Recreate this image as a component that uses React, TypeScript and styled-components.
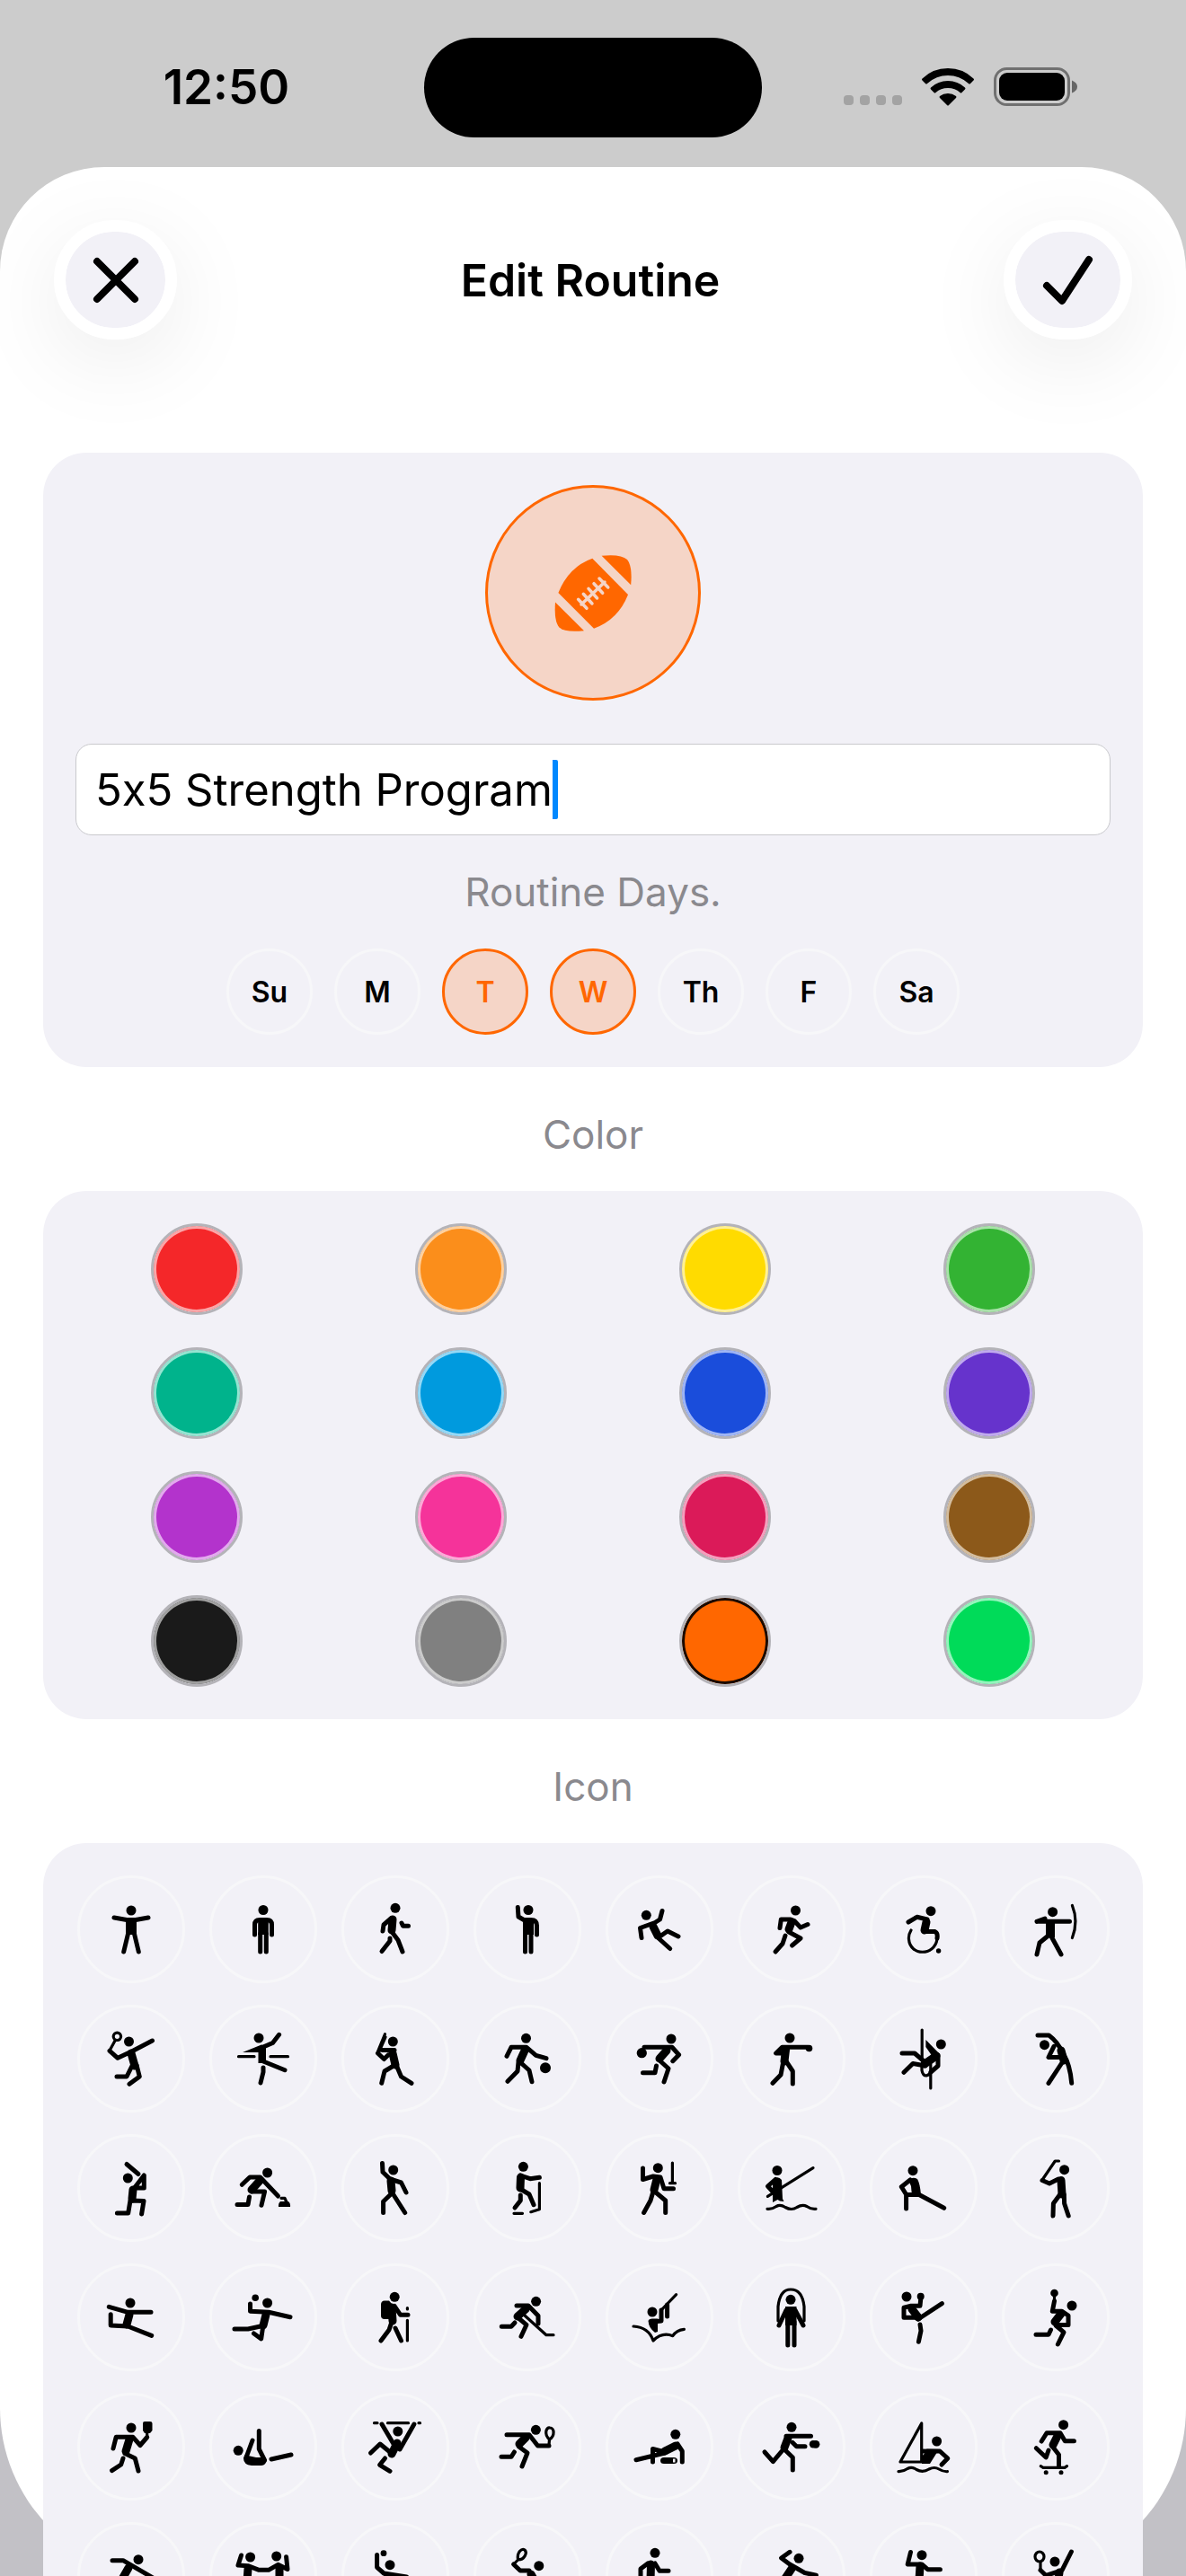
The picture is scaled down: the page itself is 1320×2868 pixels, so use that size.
import { useState } from 'react';
import styled, { createGlobalStyle } from 'styled-components';

type Dot = [number, number, number?];

// All figures are drawn round 0,0 in a 72 x 72 box
interface Figure {
  name: string;
  dots: Dot[];
  limbs?: string;
  torso?: string;
  thin?: string;
  fill?: string;
}

const figures: Figure[] = [
  { name: 'Arms open', dots: [[0, -21]], limbs: 'M-19-13L-5-10.5H5L19-13M-3.5 5L-8.3 25M3.5 5L8.3 25', fill: 'M-6-11H6L6 6H-6Z' },
  { name: 'Stand', dots: [[0, -21.5]], limbs: 'M-9.5 6V-5Q-9.5-10.5-4-10.5H4Q9.5-10.5 9.5-5V6M-3.3 5V25M3.3 5V25', fill: 'M-5.8-12H5.8V6H-5.8Z' },
  { name: 'Walk', dots: [[0, -23.7]], limbs: 'M-5-12L-13-5L-14 2M7-7L8.5-3.7H14.5M-3 4L3 12L8 25M-6 10L-6 13L-15 24.5', torso: 'M-3-11L-4 1' },
  { name: 'Wave', dots: [[1, -21.5]], limbs: 'M-10.7-24.5L-10-14L-4-10.5H4Q10.5-10.5 10.5-4V6M-2.5 5V25M4 5V25', fill: 'M-5-12H7V6H-5Z' },
  { name: 'Fall', dots: [[-14.7, -15.7]], limbs: 'M3-20.5L.5-11L-5-7.5L-21.5-1.5L-20 9.5M-1 9L9 2L21 8M-1 10L11.7 21.5', torso: 'M-7-3L-2 7' },
  { name: 'Run', dots: [[4.5, -21]], limbs: 'M-13-1.5L-11.7-11H-1L3-9.5L10-2L18-5.5M-3 3L10 10L.5 18M-7 7L-10 16L-18 25', torso: 'M0-8L-3 0' },
  { name: 'Wheelchair', dots: [[8, -20.3], [16.6, 24, 2.7]], limbs: 'M-17-8L-7.5-13.7L4-11M2 2.5H12.5Q16 4 15 10', torso: 'M3-8L1 1', thin: 'M-14 1Q-17 6-16.5 11C-15 30 12 30 15 11V6' },
  { name: 'Archery', dots: [[-3.4, -19.3]], limbs: 'M-21-8.7L-12-12M-21-8.7H15.5M-7 6L-18 15L-21 28M-6 6L6 28', fill: 'M-11-10H-1V9H-11Z', thin: 'M18.4-26.5Q25.5-9 18.4 9.5' },

  { name: 'Badminton', dots: [[-2.5, -19]], limbs: 'M-24-8.7L-15-.7L2-8.7L23.5-20M1 8L-5 20H-16M6 7L9.3 20L-2 28.3', torso: 'M0-6L4 8', thin: 'M-11.4-24.7A4.2 4.2 0 1 0-19.8-24.7A4.2 4.2 0 1 0-11.4-24.7M-18-20L-24-9' },
  { name: 'Barre', dots: [[-5, -23]], limbs: 'M17.6-26.7L10.5-17.5L0-13M0 3L24 12.7M0 10V15L-3 27', fill: 'M-23-7L-2-15.5L3-14V5H-5.5V-7Z', thin: 'M-27.5-2.3H-10M8-2.3H27.5' },
  { name: 'Baseball', dots: [[-2.7, -19]], limbs: 'M-19.5-6L-12.6.5L-8-4M-14.5-9.5H-1M-2 8L-12 14L-15.3 27.3M1 7L6.5 20L18 27.3', torso: 'M-3-6L0 7', thin: 'M-11.5-27.3L-19.5-8M-11-24L-18-8' },
  { name: 'Basketball', dots: [[-1.5, -22.7], [20, 10.3, 6]], limbs: 'M-23-2.7L-18-12.7H-1L9.5-3.7L21-.3M-10 4L-11 14L-22 25.3M-8 4L2 13L5 25.7', torso: 'M-3-9L-8 2' },
  { name: 'Bowling', dots: [[13, -22], [-19.7, -6.3, 5.6]], limbs: 'M-17-12.7H14L21.6-4.3L14.8 2.7M-1 1L10 11L5 26M-3.5 8L-5 15.7H-18.5', torso: 'M8-9L0 0' },
  { name: 'Boxing', dots: [[-2, -23], [19.5, -11.5, 3.8]], limbs: 'M18-12.7H-10.5L-17.4-6H-10M-9.5 5L-12 18L-21 27.3M-6 3L1.3 14V28', torso: 'M-6.5-10L-8 3' },
  { name: 'Climbing', dots: [[19.3, -16]], limbs: 'M-24-6H-10L-.7 2M-22 15.3L-12 5.5L2 8M16-4V8L8 15', torso: 'M14-3L1 6', thin: 'M-1.8-32V-1M7.8 6V33M-2 8V13Q-1 19 3 19Q7 18 8 14', fill: 'M2.4-21L18-5L10-2L2.4-13Z' },
  { name: 'Cooldown', dots: [[-12.5, -15.3]], limbs: 'M-20-26H-7.6Q2-19 8-6Q16 6 17.7 27.3M-2-13.7L-8-1.5H6M8 3L-8 27.3', torso: 'M6-9L9 2' },

  { name: 'Cricket', dots: [[-3.7, -11]], limbs: 'M-5-26.5L8-15.5M14.3-14V0H4M14.3-14L2 2M1 14L14 14.5L11.6 29M-1 14L-3.3 28H-15.6', torso: 'M2 2L1 12' },
  { name: 'Curling', dots: [[4.6, -17]], limbs: 'M-23.7-3.7L-15-12H-3.4L16.5 9M-13 4H1.6L-2 19.3M-15.5 10L-17 18.5H-29', torso: 'M-4-8L-13 2', thin: 'M20 11.3H24L26 16', fill: 'M19 15H28Q30.5 17 30 21H17Q16.5 17 19 15Z' },
  { name: 'Dance', dots: [[-2.3, -20]], limbs: 'M-14.5-27.5L-14-17.7L-6-10L6.5-6L12 5M-3 6L10.7 27.5M-4 6L-13.4 15V27.5', torso: 'M-5-8L-4 3' },
  { name: 'Elliptical', dots: [[-4.6, -23.7]], limbs: 'M-8-14L3-10.3L13.4-11.7M-8 1L2 7L7 18.7M-7.7 8V14L-14 22', torso: 'M-7.5-12L-8 0', thin: 'M13.4-5.3V23.7L3.8 26.7M-15 28.3H-5.5' },
  { name: 'Fencing', dots: [[-1.7, -22.3]], limbs: 'M-18.5-22V-9.5L-7-13L1-12L5 .7H15.5M-7 4L-10 14L-17.4 27.5M-4 5L6.7 14V27.5', torso: 'M-3-10L-6 2', thin: 'M14.4-28V-7M11.5-5.3H17.5' },
  { name: 'Fishing', dots: [[-16, -19.5]], limbs: 'M-18-9.5L-26.5-2L-21 4', fill: 'M-20-10Q-15-14-11-9L-10 12L-8.5 15L-13 14.5L-15.5 13L-21 16L-21-4Z', thin: 'M-26.6 9.3L24-22.3M-27 23.3Q-22 24-17 20.5Q-12.5 18-7 21.5Q0 25.5 6 21.5Q12 18 17 20.5Q22 24 27 23.3' },
  { name: 'Flexibility', dots: [[-12, -19.3]], limbs: 'M-15-9L-24.7-1.3L-19.4 7.3V23M-19 7.5H-5L22.7 22.3', fill: 'M-17-9Q-12-13-7-10Q-4-5-3 8L-12 9Q-14 4-14-2Z' },
  { name: 'Golf', dots: [[9.6, -20.3]], limbs: 'M-15-8.5L-7-5L3-10M4.7 7.3L-2.6 17.3L-3 31M9.3 7.3L9.6 17.3L14.2 31', torso: 'M6-8.5L7 7', thin: 'M3.5-30H-.7L-15-9' },

  { name: 'Gymnastics', dots: [[-1, -16]], limbs: 'M-24.7-11.7L-3.7-5.7H22M-22.8-3.3V9L-3.7 10L22.7 20.3', torso: 'M-2-3L-5 8' },
  { name: 'Handball', dots: [[4.6, -16], [-8.8, -21.7, 3.8]], limbs: 'M-14.5-15V-6.7L6-5.7L30-.3M-3 10L-17 13H-32M0 8L-2.3 24L-10.5 18', torso: 'M3-3L0 9' },
  { name: 'Hiking', dots: [[-0.8, -22.7]], limbs: 'M-1-12.7L5.7-2.7H14M-4 5L-7 14L-16 26M0 12L6.5 26', torso: 'M-4-11L-3 4', thin: 'M13.4 3.3V26M13.4-10.5V-9', fill: 'M-12-18.5H-7L-3-14V2H-12Q-16 2-16-2V-14Q-16-18.5-12-18.5Z' },
  { name: 'Hockey', dots: [[9.6, -17.7]], limbs: 'M-12-13H1L12-1.7V7M-11 0L-1 8.3L-7 21.3M-14 6L-18 10.3H-28.7', torso: 'M-2-9L-11-1', thin: 'M-3-2L21 19.7H29' },
  { name: 'Kitesurf', dots: [[-8, -6]], limbs: 'M8.6-14V-1M2-8V4L-7 5', fill: 'M-12.5 4Q-12 1.5-8 1.5H-2V16L-5 17Q-12 12-12.5 4Z', thin: 'M18.6-25.3L2-8M-29 10Q-12 11-7 26Q3 16 14.8 20.7Q19 14 27.4 13.3' },
  { name: 'Jump rope', dots: [[-1, -19.7]], limbs: 'M-14 9L-6-8H4L13 9M-4.2 5V31M3 5V31', fill: 'M-7-12H5.5V9H-7Z', thin: 'M-15 4V-12Q-13-31-1-31Q12-31 14-12V4' },
  { name: 'Kickboxing', dots: [[-19, -23], [-3.3, -23.3, 4]], limbs: 'M-3.3-20L-4-12.7H-14L-22-10.7V.2H-8M-6 2L20.4-15.3M-4 8L-3 15L-5.6 27.3', torso: 'M-13-9L-6 0' },
  { name: 'Lacrosse', dots: [[18, -13], [-1.5, -27, 4.3]], limbs: 'M-1.5-18L-3.7-6.7H7L14-2V8.5H3.5M0 9L9 16.7L2.4 30M-5.5 14L-8 19.3H-22', torso: 'M6-4L-1 5', thin: 'M-1.5-25V-18' },

  { name: 'Pickleball', dots: [[0, -21]], limbs: 'M17.7-10.5L10-1.5L2-10.7H-16.8L-20 2M-7 7.5L4.3 13L8 27M-9 13L-11.3 20L-21.4 26.7', torso: 'M-2-8L-6 5', thin: 'M17.7-15V-10', fill: 'M15-28H21Q23.5-28 23.5-26V-18L21-15H15L13-18V-26Q13-28 15-28Z' },
  { name: 'Pilates', dots: [[-27.8, 4.3]], limbs: 'M-12-7L-19 12M-4.7-17.5V2.7L1.5 15M9 14L31 9', fill: 'M-20.5 9L-17 10L-8 12H1.5L4 15Q3 20.5-2 21H-13Q-22 20-22 13Z' },
  { name: 'Climbing bar', dots: [[2.8, -17]], limbs: 'M-15-25L-2-3M20.9-25L5 3M-6 6L-17-3L-27.5 7M-11.5 13L-17.4 20.3L-6 27.3', torso: 'M2-4L-4 8', thin: 'M-23.5-26.3H-20M-8.5-26.3H14.5M26-26.3H27.5' },
  { name: 'Racquetball', dots: [[9.4, -18.7]], limbs: 'M-23-13.3H2L11.5-1H24M-9.5 0L0 7L-6 22M-14.6 6L-18 11.3H-29', torso: 'M-2-10L-9-3', thin: 'M24-2L24.5-8C18-14 21-22 25-21C30-21 31-12 24.5-8' },
  { name: 'Foam roller', dots: [[17.8, -13.7]], limbs: 'M20-3L25.3 5V17M6 7L-26 14.7M6 6L-7.5 2.5V17', torso: 'M18-1L6 5', fill: 'M5 12H16Q20 12 20 15.5Q20 19 16 19H5Q1 19 1 15.5Q1 12 5 12ZM15 13.5V17.5H17.5V13.5Z' },
  { name: 'Rugby', dots: [[0, -21.7], [27, -2.7, 4.4], [24, -2.7, 4.2]], limbs: 'M-6-11.7H21.5M1-4.7L5.5-.3H15M-10 4L-20.6 16.7L-30 6M-7 4L1.3 12V26', torso: 'M-4-9.5L-8 1' },
  { name: 'Sailing', dots: [[14.6, -6]], limbs: 'M4 5H18L26.8 13L20 20', thin: 'M-2.3-26V17H-26ZM-28 27.7Q-23 28-18 24.5Q-13 22-8 25.5Q-1 29.5 6 25Q12 22 17 25Q22 28 26.4 27.7', fill: 'M-2 2.5L17 3L7 19H-2V11L1 7.5H-2Z' },
  { name: 'Skateboard', dots: [[8.6, -24.3], [-10.8, 28.7, 2.5], [6, 28.7, 2.5]], limbs: 'M-15.8-6L-10-15.3H5L10.3-6.3H20.4M-3.5 0L3.5 9V22M-8 4L-10.8 12L-21.7 1.7', torso: 'M2-12L-3-2', thin: 'M-16.7 21.7L-14 23.3H10L12.5 21.7' },

  { name: 'Skiing', dots: [[8, -18.3]], limbs: 'M-21-17.3H-9L24 2', torso: 'M-3-9L-11 5' },
  { name: 'Social dance', dots: [[-14.4, -21], [14.7, -22]], limbs: 'M-24.5-23L-28-12L-17-11.3L-4.7-6.7H5.9L16.4-12.7L27-7.5L25.6-21.3', torso: 'M-17-8L-18 6M18-9V6' },
  { name: 'Softball', dots: [[-6, -12.3], [-13, -25.3, 3.4]], limbs: 'M-20.4-23.5V-9.7L-12.8-3L12.5 1', torso: 'M-9 2V8' },
  { name: 'Squash', dots: [[12.8, -11.3]], limbs: 'M-15.4-13L-8-6H2', torso: 'M4-2L8 5', thin: 'M-15.4-13L-10.5-18C-12-27-6-31-3-29C0-26-3-18-10.5-18' },
  { name: 'Stair stepper', dots: [[-5, -25.7]], limbs: 'M-13-14L-21-8V4M-5-14L0-5.7H10', torso: 'M-9.5-13L-10 5' },
  { name: 'Strength', dots: [[8, -19.7]], limbs: 'M-2-26.7L-11.4-20L-2-13L14.7-3.5L27.4-.7', torso: 'M0-8L-8 4' },
  { name: 'Taichi', dots: [[-2, -23.3]], limbs: 'M-14.5-26.5L-17.8-13H-2L4.5-7.3H18.4', torso: 'M-4-11L-5 5' },
  { name: 'Tennis', dots: [[-1, -16]], limbs: 'M-17-6.5L-10.8-.5L7-6.3L17.4-27', torso: 'M4-4L2.7 5', thin: 'M-13-21.5A5 5.5 0 1 0-23-21.5A5 5.5 0 1 0-13-21.5M-17-15V-7' },
];

const swatches = [
  { name: 'Red', value: '#f42729', tint: '#faa5a7' },
  { name: 'Orange', value: '#fb8e1b', tint: '#fdd09f' },
  { name: 'Yellow', value: '#ffdb00', tint: '#fff095' },
  { name: 'Green', value: '#33b333', tint: '#aae2aa' },
  { name: 'Teal', value: '#00b38c', tint: '#95e4d1' },
  { name: 'Sky', value: '#009ade', tint: '#95d8f5' },
  { name: 'Blue', value: '#1a4ddb', tint: '#9fb5f4' },
  { name: 'Indigo', value: '#6633cc', tint: '#c0aaed' },
  { name: 'Purple', value: '#b333cc', tint: '#e2aaed' },
  { name: 'Pink', value: '#f5339a', tint: '#fbaad7' },
  { name: 'Crimson', value: '#db1a59', tint: '#f49fbd' },
  { name: 'Brown', value: '#8c591a', tint: '#d3bd9f' },
  { name: 'Black', value: '#1a1a1a', tint: '#9f9f9f' },
  { name: 'Gray', value: '#808080', tint: '#cbcbcb' },
  { name: 'Tangerine', value: '#ff6700', tint: '#ffc095' },
  { name: 'Mint', value: '#00db59', tint: '#95f4bd' },
];

const days = ['Su', 'M', 'T', 'W', 'Th', 'F', 'Sa'];

const FigureIcon = ({ dots, limbs, torso, thin, fill }: Figure) => (
  <FigureSvg viewBox="-36 -36 72 72" aria-hidden="true">
    {fill && <path d={fill} fill="#000" fillRule="evenodd" stroke="none" />}
    {torso && <path d={torso} strokeWidth="9" />}
    {limbs && <path d={limbs} strokeWidth="5" />}
    {thin && <path d={thin} strokeWidth="3.2" />}
    {dots.map(([x, y, r = 5.5]) => (
      <circle key={`${x},${y}`} cx={x} cy={y} r={r} fill="#000" stroke="none" />
    ))}
  </FigureSvg>
);

const Football = () => (
  <svg width="90" height="90" viewBox="-45 -45 90 90" aria-hidden="true">
    <g fill="#ff6700">
      <path d="M-.7-38.3L39 2Q28 30 1 39.7L-38.6 0Q-27-29-.7-38.3Z" />
      <path d="M9.6-41.3Q31-43.5 38-37Q44-30 42.2-8.7Z" />
      <path d="M-42 10.5Q-43.5 32-37.5 38.5Q-31 44.5-10 42.2Z" />
    </g>
    <path
      d="M-13 13L13-12M-16.4 7.3L-7 17.3M-10.7 1.3L-1 12M-5-4.7L4.6 6M1-10.3L10.7.3M7-16L16.8-6"
      fill="none"
      stroke="#f5d5c7"
      strokeWidth="3.5"
      strokeLinecap="round"
    />
  </svg>
);

const WifiIcon = () => (
  <svg width="58" height="42" viewBox="0 0 58 42" aria-hidden="true">
    <path d="M29 0Q46 0 57.5 11.5Q58.5 12.5 57.5 13.5L54 17Q53 18 52 17Q42 8 29 8Q16 8 6 17Q5 18 4 17L.5 13.5Q-.5 12.5.5 11.5Q12 0 29 0Z" />
    <path d="M29 14Q40 14 48 21.5Q49 22.5 48 23.5L44.5 27Q43.5 28 42.5 27Q37 22 29 22Q21 22 15.5 27Q14.5 28 13.5 27L10 23.5Q9 22.5 10 21.5Q18 14 29 14Z" />
    <path d="M29 28Q34 28 38 31Q39 32 38 33L30 41Q29 42 28 41L20 33Q19 32 20 31Q24 28 29 28Z" />
  </svg>
);

const BatteryIcon = () => (
  <svg width="94" height="44" viewBox="0 0 94 44" aria-hidden="true">
    <rect x="1.5" y="1.5" width="82" height="40" rx="13" fill="none" stroke="#000" strokeOpacity=".45" strokeWidth="3" />
    <rect x="6" y="6" width="73" height="31" rx="9" />
    <path d="M87 14.5Q93 17 93 21.5Q93 26 87 28.5Z" fillOpacity=".5" />
  </svg>
);

const App = () => {
  const [name, setName] = useState('5x5 Strength Program');
  const [activeDays, setActiveDays] = useState(['T', 'W']);
  const [color, setColor] = useState('#ff6700');

  const toggleDay = (day: string) => {
    setActiveDays((prev) => (prev.includes(day) ? prev.filter((d) => d !== day) : [...prev, day]));
  };

  return (
    <>
      <GlobalStyle />
      <Screen>
        <StatusBar>
          <Time>12:50</Time>
          <Island />
          <StatusIcons>
            <Signal>
              <i />
              <i />
              <i />
              <i />
            </Signal>
            <WifiIcon />
            <BatteryIcon />
          </StatusIcons>
        </StatusBar>
        <Sheet>
          <Header>
            <RoundButton type="button" aria-label="Cancel">
              <svg width="54" height="54" viewBox="-27 -27 54 54">
                <path d="M-21-21L21 21M21-21L-21 21" />
              </svg>
            </RoundButton>
            <Title>Edit Routine</Title>
            <RoundButton type="button" aria-label="Save" $wide>
              <svg width="60" height="60" viewBox="-30 -30 60 60">
                <path d="M-24 6L-7 23L23-23" />
              </svg>
            </RoundButton>
          </Header>
          <Content>
            <RoutineCard>
              <Emblem type="button" aria-label="Routine icon">
                <Football />
              </Emblem>
              <NameField>
                <NameInput aria-label="Routine name" value={name} onChange={(e) => setName(e.target.value)} />
                <Caret aria-hidden="true">
                  <span>{name}</span>
                </Caret>
              </NameField>
              <CardLabel>Routine Days.</CardLabel>
              <DayRow>
                {days.map((day) => (
                  <DayButton
                    key={day}
                    type="button"
                    $active={activeDays.includes(day)}
                    aria-pressed={activeDays.includes(day)}
                    onClick={() => toggleDay(day)}
                  >
                    {day}
                  </DayButton>
                ))}
              </DayRow>
            </RoutineCard>
            <SectionTitle>Color</SectionTitle>
            <Grid $columns={4} $gap={36}>
              {swatches.map((swatch) => (
                <Swatch
                  key={swatch.name}
                  type="button"
                  aria-label={swatch.name}
                  aria-pressed={swatch.value === color}
                  $color={swatch.value}
                  $ring={swatch.value === color ? '#1a0a00' : swatch.tint}
                  onClick={() => setColor(swatch.value)}
                />
              ))}
            </Grid>
            <SectionTitle>Icon</SectionTitle>
            <Grid $columns={8} $gap={24}>
              {figures.map((figure) => (
                <IconButton key={figure.name} type="button" aria-label={figure.name}>
                  <FigureIcon {...figure} />
                </IconButton>
              ))}
            </Grid>
          </Content>
        </Sheet>
      </Screen>
    </>
  );
};

export default App;

const GlobalStyle = createGlobalStyle`
  * {
    box-sizing: border-box;
  }
  body {
    margin: 0;
    color: #000;
    font-family: Inter, 'Liberation Sans', sans-serif;
  }
  button {
    padding: 0;
    border: none;
    background: none;
    font-family: inherit;
    color: inherit;
    cursor: pointer;
  }
`;

const Screen = styled.div`
  display: flex;
  flex-direction: column;
  height: 100vh;
  overflow: hidden;
  background: linear-gradient(#ccc 0 50%, #c2c1c6 50%);
`;

const StatusBar = styled.div`
  display: grid;
  grid-template-columns: 1fr 376px 1fr;
  align-items: center;
  flex-shrink: 0;
  height: 186px;
  padding: 8px 0 0;
`;

const Time = styled.span`
  padding-left: 32px;
  font-size: 53px;
  font-weight: 600;
  line-height: 60px;
  text-align: center;
`;

const Island = styled.div`
  height: 111px;
  border-radius: 56px;
  background: #000;
`;

const StatusIcons = styled.div`
  display: flex;
  align-items: center;
  justify-content: flex-end;
  gap: 22px;
  padding-right: 120px;
`;

const Signal = styled.span`
  display: flex;
  align-self: flex-end;
  gap: 7px;
  padding-bottom: 2px;
  i {
    width: 11px;
    height: 11px;
    border-radius: 4px;
    background: #a3a3a3;
  }
`;

const Sheet = styled.main`
  flex: 1;
  min-height: 0;
  background: #fff;
  border-radius: 116px 116px 187px 187px;
`;

const Header = styled.header`
  display: flex;
  align-items: center;
  justify-content: space-between;
  padding: 59px 60px 0;
`;

const RoundButton = styled.button<{ $wide?: boolean }>`
  display: flex;
  align-items: center;
  justify-content: center;
  width: ${({ $wide }) => ($wide ? 143 : 137)}px;
  height: 133px;
  border: 13px solid #fff;
  border-radius: 72px;
  background: #f2f1f7;
  background-clip: padding-box;
  box-shadow: 0 24px 100px rgba(0, 0, 0, 0.08);
  path {
    fill: none;
    stroke: #000;
    stroke-width: 8px;
    stroke-linecap: round;
    stroke-linejoin: round;
  }
`;

const Title = styled.h1`
  margin: 0;
  font-size: 50px;
  font-weight: 600;
  line-height: 60px;
`;

const Content = styled.div`
  padding: 126px 48px 0;
`;

const Card = styled.section`
  padding: 36px;
  border-radius: 48px;
  background: #f2f1f7;
`;

const RoutineCard = styled(Card)`
  display: flex;
  flex-direction: column;
  align-items: center;
`;

const Emblem = styled.button`
  display: flex;
  align-items: center;
  justify-content: center;
  width: 240px;
  height: 240px;
  border: 3px solid #ff6700;
  border-radius: 50%;
  background: #f5d5c7;
`;

const NameField = styled.div`
  position: relative;
  width: 100%;
  margin-top: 48px;
  font-size: 49px;
  line-height: 66px;
  font-variant-ligatures: no-contextual;
`;

const NameInput = styled.input`
  display: block;
  width: 100%;
  height: 102px;
  padding: 0 21px;
  border: 1px solid #c9c9cd;
  border-radius: 18px;
  background: #fff;
  color: #000;
  font: inherit;
  font-variant-ligatures: inherit;
  outline: none;
`;

/* blue insertion bar placed after the typed text */
const Caret = styled.div`
  position: absolute;
  top: 18px;
  left: 22px;
  pointer-events: none;
  height: 66px;
  border-right: 6px solid #0088ff;
  border-radius: 2px;
  span {
    visibility: hidden;
    white-space: pre;
  }
`;

const CardLabel = styled.p`
  margin: 33px 0;
  color: #8a898e;
  font-size: 44px;
  line-height: 60px;
`;

const DayRow = styled.div`
  display: flex;
  gap: 24px;
`;

const DayButton = styled.button<{ $active: boolean }>`
  width: 96px;
  height: 96px;
  border: 3px solid ${({ $active }) => ($active ? '#ff6700' : '#f7f7f9')};
  border-radius: 50%;
  background: ${({ $active }) => ($active ? '#f5d5c7' : 'transparent')};
  color: ${({ $active }) => ($active ? '#ff6700' : '#000')};
  font-size: 32px;
  font-weight: 600;
`;

const SectionTitle = styled.h2`
  margin: 0;
  padding: 45px 0 33px;
  color: #8a898e;
  font-size: 44px;
  font-weight: 400;
  line-height: 60px;
  text-align: center;
`;

const Grid = styled(Card)<{ $columns: number; $gap: number }>`
  display: grid;
  grid-template-columns: repeat(${({ $columns }) => $columns}, 1fr);
  justify-items: center;
  row-gap: ${({ $gap }) => $gap}px;
  padding: 36px 24px;
`;

const Swatch = styled.button<{ $color: string; $ring: string }>`
  width: 102px;
  height: 102px;
  border: 3px solid #b4b3b8;
  border-radius: 50%;
  background: ${({ $color }) => $color};
  background-clip: padding-box;
  box-shadow: inset 0 0 0 3px ${({ $ring }) => $ring};
`;

const IconButton = styled.button`
  display: flex;
  align-items: center;
  justify-content: center;
  width: 120px;
  height: 120px;
  border: 3px solid #f7f7f9;
  border-radius: 50%;
`;

const FigureSvg = styled.svg`
  width: 72px;
  height: 72px;
  fill: none;
  stroke: #000;
  stroke-linecap: round;
  stroke-linejoin: round;
`;
